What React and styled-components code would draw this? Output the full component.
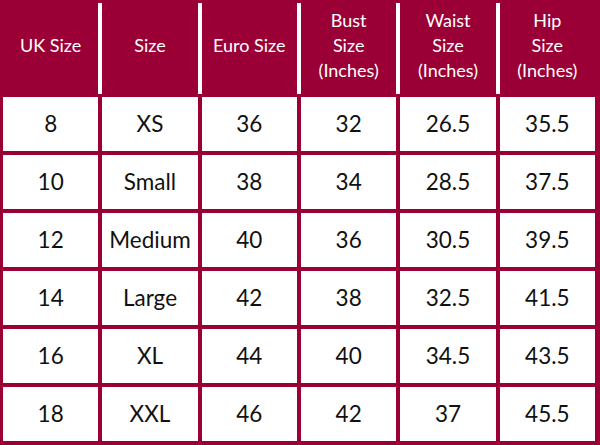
import React from "react";
import styled, { createGlobalStyle } from "styled-components";

const MAROON = "#9a0036";

const Global = createGlobalStyle`
  html, body { margin: 0; padding: 0; background: #fff; }
  body { font-family: "Lato", "Open Sans", sans-serif; }
`;

const Chart = styled.div`
  width: 600px;
  height: 445px;
  box-sizing: border-box;
  background: ${MAROON};
  padding: 3px 5px 4px 3px;
  display: flex;
  flex-direction: column;
  gap: 3px;
`;

const HeaderRow = styled.div`
  display: grid;
  grid-template-columns: repeat(6, 1fr);
  column-gap: 4px;
  height: 91px;
  background: #fff;
`;

const HeaderCell = styled.div`
  background: ${MAROON};
  color: #fff;
  display: flex;
  align-items: center;
  justify-content: center;
  text-align: center;
  font-size: 18px;
  line-height: 25px;
  padding-bottom: 6px;
  box-sizing: border-box;
`;

const Body = styled.div`
  display: grid;
  grid-template-columns: repeat(6, 1fr);
  grid-auto-rows: 54px;
  gap: 4px;
`;

const Cell = styled.div`
  background: #fff;
  color: #111;
  display: flex;
  align-items: center;
  justify-content: center;
  font-size: 22.5px;
  padding-bottom: 2px;
  box-sizing: border-box;
`;

const headers = [
  ["UK Size"],
  ["Size"],
  ["Euro Size"],
  ["Bust", "Size", "(Inches)"],
  ["Waist", "Size", "(Inches)"],
  ["Hip", "Size", "(Inches)"],
];

const rows = [
  ["8", "XS", "36", "32", "26.5", "35.5"],
  ["10", "Small", "38", "34", "28.5", "37.5"],
  ["12", "Medium", "40", "36", "30.5", "39.5"],
  ["14", "Large", "42", "38", "32.5", "41.5"],
  ["16", "XL", "44", "40", "34.5", "43.5"],
  ["18", "XXL", "46", "42", "37", "45.5"],
];

export default function App() {
  return (
    <>
      <Global />
      <Chart>
        <HeaderRow>
          {headers.map((lines, i) => (
            <HeaderCell key={i}>
              <div>
                {lines.map((l, j) => (
                  <div key={j}>{l}</div>
                ))}
              </div>
            </HeaderCell>
          ))}
        </HeaderRow>
        <Body>
          {rows.flatMap((r, i) =>
            r.map((v, j) => <Cell key={`${i}-${j}`}>{v}</Cell>)
          )}
        </Body>
      </Chart>
    </>
  );
}
